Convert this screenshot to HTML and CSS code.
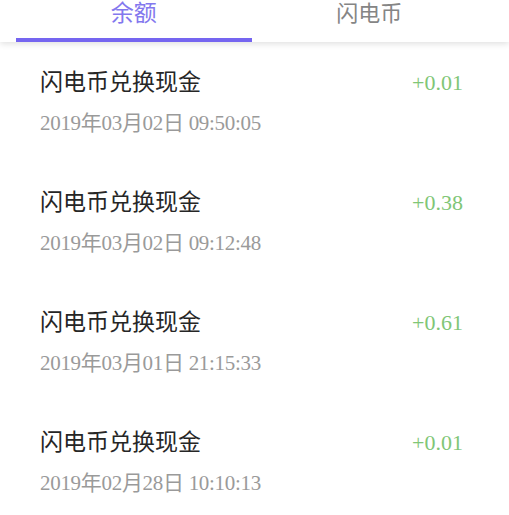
FILE: index.html
```html
<!DOCTYPE html>
<html lang="zh-CN">
<head>
  <meta charset="UTF-8">
  <title>余额明细</title>
  <link rel="stylesheet" href="styles.css">
</head>
<body>
  <div class="tabs">
    <div class="tab active">余额</div>
    <div class="tab">闪电币</div>
  </div>

  <ul class="records">
    <li class="record">
      <div class="info">
        <div class="title">闪电币兑换现金</div>
        <div class="time">2019年03月02日 09:50:05</div>
      </div>
      <div class="amount">+0.01</div>
    </li>
    <li class="record">
      <div class="info">
        <div class="title">闪电币兑换现金</div>
        <div class="time">2019年03月02日 09:12:48</div>
      </div>
      <div class="amount">+0.38</div>
    </li>
    <li class="record">
      <div class="info">
        <div class="title">闪电币兑换现金</div>
        <div class="time">2019年03月01日 21:15:33</div>
      </div>
      <div class="amount">+0.61</div>
    </li>
    <li class="record">
      <div class="info">
        <div class="title">闪电币兑换现金</div>
        <div class="time">2019年02月28日 10:10:13</div>
      </div>
      <div class="amount">+0.01</div>
    </li>
  </ul>
</body>
</html>
```

FILE: styles.css
```css
body {
  margin: 0;
  background: #ffffff;
  font-family: "Liberation Serif", "Noto Sans CJK SC", serif;
  overflow: hidden;
}

.tabs {
  display: flex;
  height: 42px;
  padding: 0 22px 0 16px;
  box-shadow: 0 2px 6px rgba(0, 0, 0, 0.12);
}

.tab {
  flex: 1;
  text-align: center;
  font-size: 22px;
  line-height: 28px;
  color: #858585;
}

.tab.active {
  font-size: 23px;
  color: #8378ee;
  border-bottom: 4px solid #7565f0;
}

.records {
  list-style: none;
  margin: 0;
  padding: 0;
}

.record {
  display: flex;
  justify-content: space-between;
  height: 120px;
  padding: 26px 46px 0 40px;
  box-sizing: border-box;
}

.title {
  font-size: 23px;
  line-height: 30px;
  color: #262626;
}

.time {
  margin-top: 14px;
  font-size: 21px;
  line-height: 22px;
  letter-spacing: -0.3px;
  color: #9a9a9a;
}

.amount {
  font-size: 22px;
  line-height: 30px;
  color: #80c676;
}
```
